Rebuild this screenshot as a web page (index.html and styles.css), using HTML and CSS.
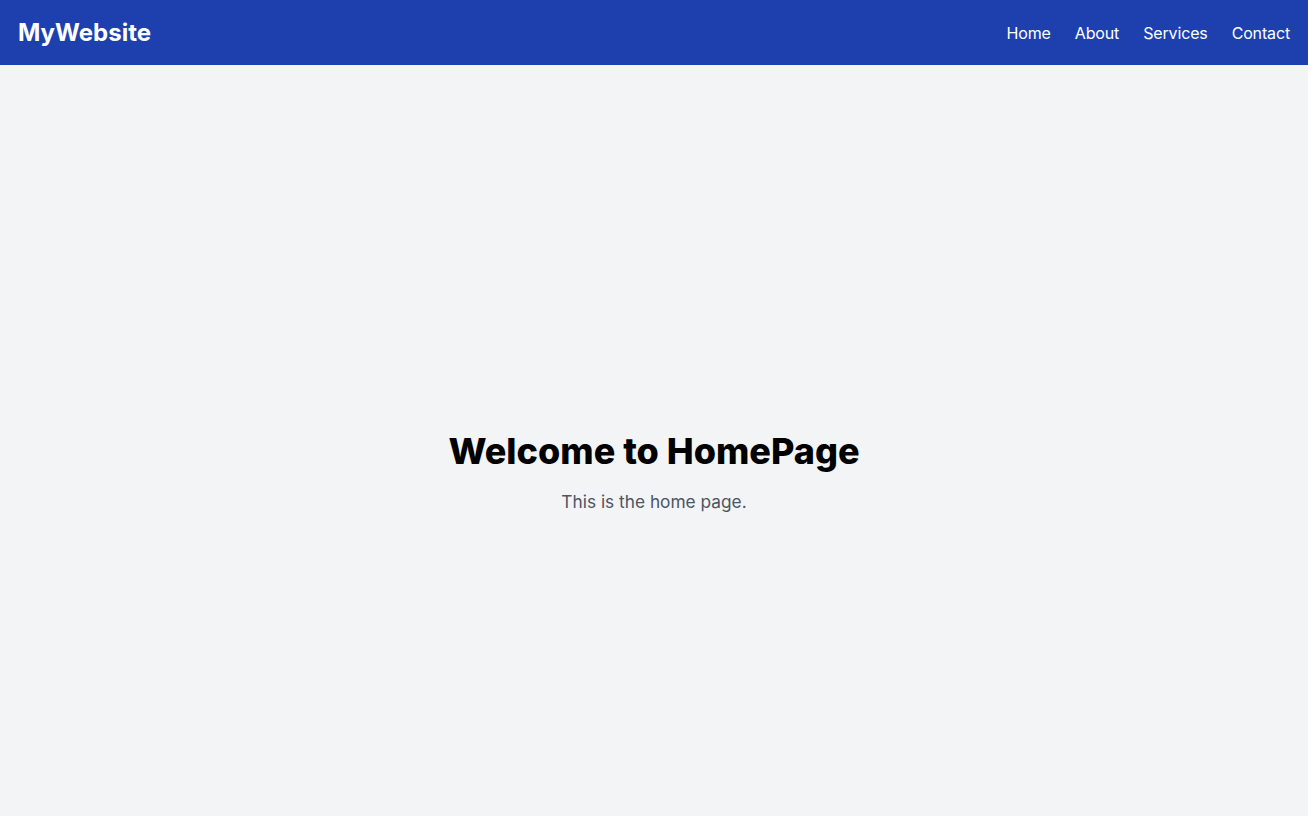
FILE: index.html
```html
<!DOCTYPE html>
<html lang="en">
<head>
<meta charset="utf-8">
<title>MyWebsite</title>
<link rel="stylesheet" href="styles.css">
</head>
<body>
<nav class="navbar">
  <a class="brand" href="#">MyWebsite</a>
  <ul class="nav-links">
    <li><a href="#">Home</a></li>
    <li><a href="#">About</a></li>
    <li><a href="#">Services</a></li>
    <li><a href="#">Contact</a></li>
  </ul>
</nav>
<main class="hero">
  <h1 class="hero-title">Welcome to HomePage</h1>
  <p class="hero-text">This is the home page.</p>
</main>
</body>
</html>
```

FILE: styles.css
```css
* { box-sizing: border-box; }
html, body { margin: 0; padding: 0; }
body {
  background: #f3f4f6;
  font-family: Inter, "Noto Sans", sans-serif;
  color: #000;
}
.navbar {
  height: 65px;
  background: #1e40af;
  display: flex;
  align-items: center;
  justify-content: space-between;
  padding: 0 18px 0 18px;
}
.brand {
  color: #fff;
  font-size: 24px;
  font-weight: 700;
  text-decoration: none;
}
.nav-links {
  list-style: none;
  margin: 0;
  padding: 0;
  display: flex;
  gap: 24px;
}
.nav-links a {
  color: #fff;
  text-decoration: none;
  font-size: 16px;
  letter-spacing: -0.15px;
}
.hero {
  min-height: 100vh;
  display: flex;
  flex-direction: column;
  align-items: center;
  justify-content: center;
}
.hero-title {
  margin: 0;
  font-size: 36px;
  line-height: 40px;
  font-weight: 800;
}
.hero-text {
  margin: 17px 0 0;
  font-size: 17.3px;
  line-height: 28px;
  color: #4b5563;
}
```
